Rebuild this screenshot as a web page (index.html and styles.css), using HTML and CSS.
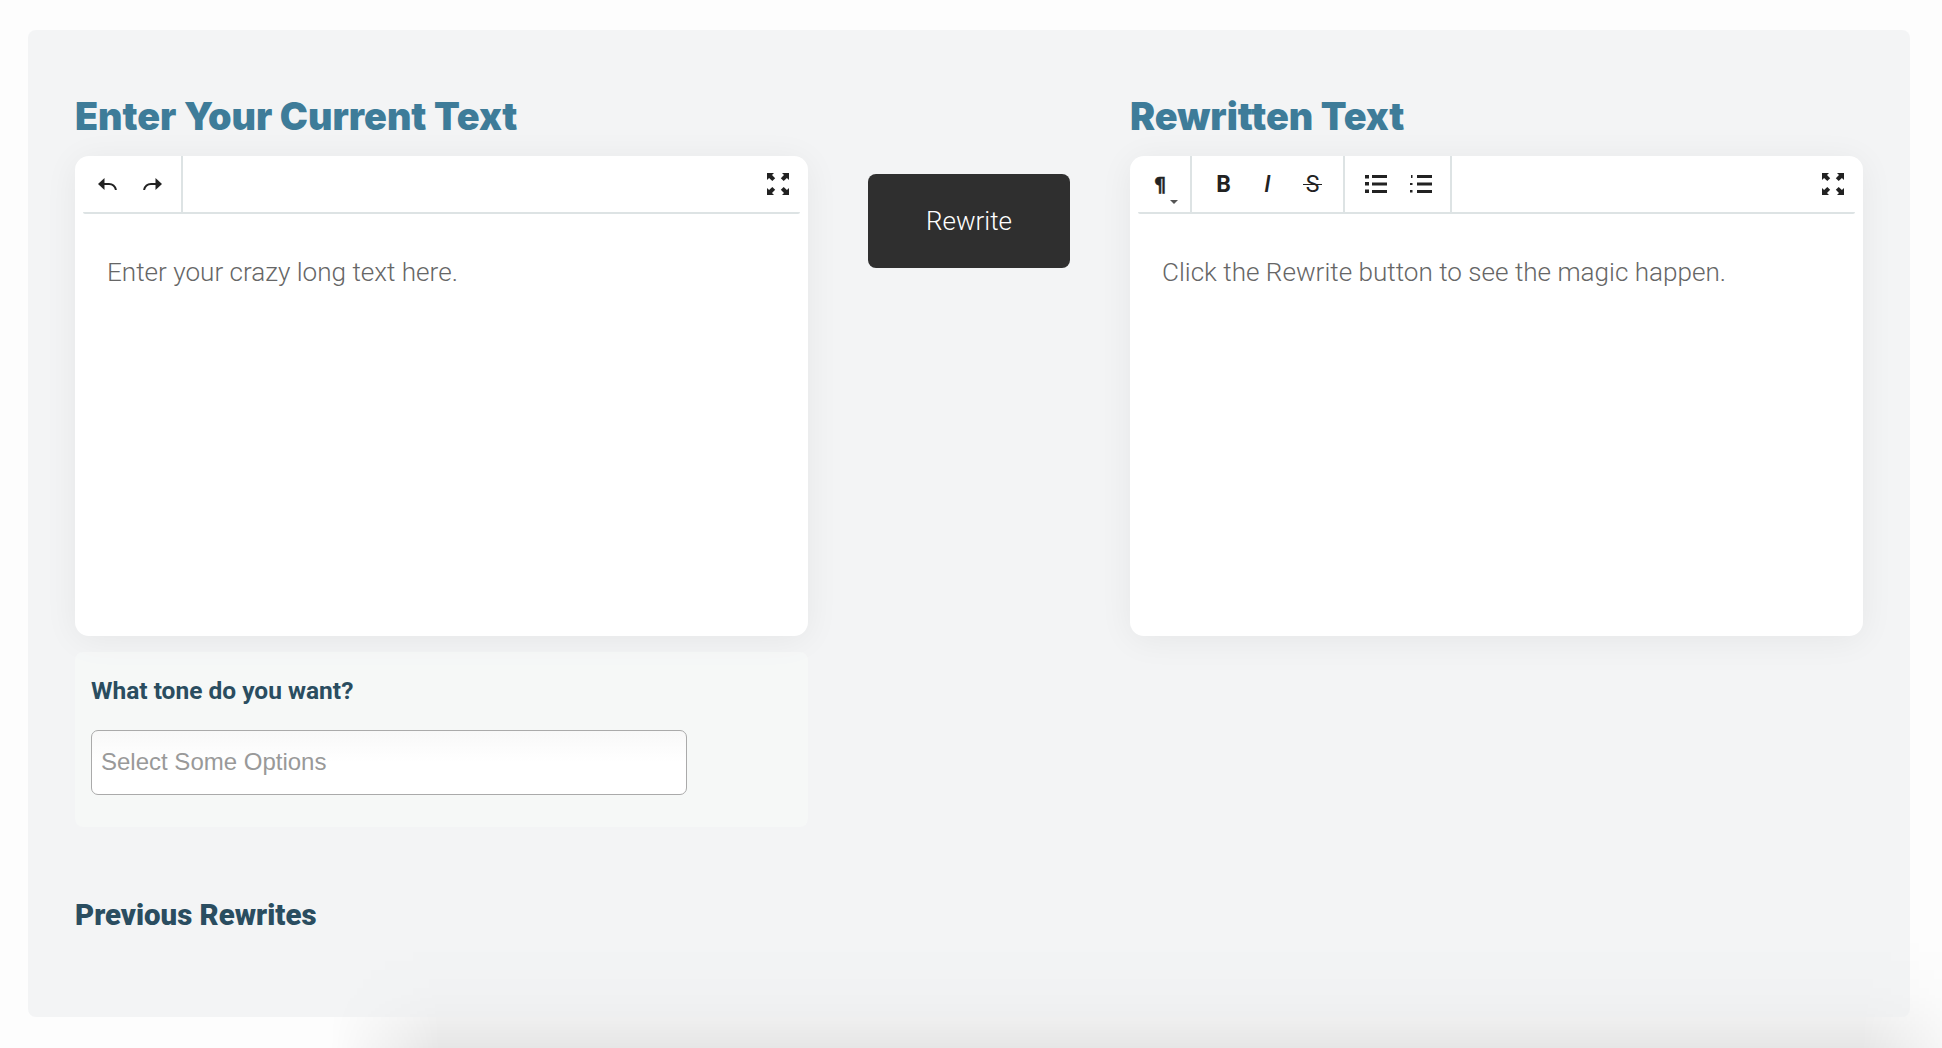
FILE: index.html
```html
<!DOCTYPE html>
<html lang="en">
<head>
<meta charset="utf-8">
<title>Rewriter</title>
<link rel="stylesheet" href="styles.css">
</head>
<body>
<div class="glow"></div>
<main class="panel">
  <div class="columns">
    <section class="col">
      <h2 class="title">Enter Your Current Text</h2>
      <div class="card">
        <div class="toolbar">
          <div class="group group-first">
            <button class="tool"><svg class="ic-arrow" viewBox="0 0 19 12"><path d="M0 6 6.5 0v12z" class="fill"/><path d="M5 6h6c3.5 0 6 2 7 6" class="line"/></svg></button>
            <button class="tool"><svg class="ic-arrow" viewBox="0 0 19 12"><path d="M19 6 12.5 0v12z" class="fill"/><path d="M14 6H8C4.500 6 2 8 1 12" class="line"/></svg></button>
          </div>
          <button class="tool tool-full"><svg class="ic-full" viewBox="0 0 22 22"><path class="fill" d="M0 0h7L5 2l3.200 3.200-2.900 2.900L2.100 4.900 0 7zM22 0v7l-2.100-2.100-3.200 3.200-2.900-2.900L17 2l-2-2zM0 22v-7l2.100 2.100 3.200-3.200 2.900 2.900L5 20l2 2zM22 22h-7l2-2-3.200-3.200 2.900-2.900 3.200 3.200L22 15z"/></svg></button>
        </div>
        <p class="placeholder">Enter your crazy long text here.</p>
      </div>
      <div class="tone">
        <label class="tone-label">What tone do you want?</label>
        <div class="select">Select Some Options</div>
      </div>
    </section>
    <div class="action">
      <button class="rewrite">Rewrite</button>
    </div>
    <section class="col">
      <h2 class="title">Rewritten Text</h2>
      <div class="card">
        <div class="toolbar">
          <div class="group group-para">
            <button class="tool tool-para"><span class="glyph-para">¶</span><span class="caret"></span></button>
          </div>
          <div class="group">
            <button class="tool"><span class="glyph-b">B</span></button>
            <button class="tool"><span class="glyph-i">I</span></button>
            <button class="tool"><span class="glyph-s">S</span></button>
          </div>
          <div class="group group-lists">
            <button class="tool"><svg class="ic-list" viewBox="0 0 22 18"><path class="fill" d="M0 0h4v3.500H0zM7 0h15v3H7zM0 7h4v3.500H0zM7 7.500h15v3H7zM0 14.500h4V18H0zM7 15h15v3H7z"/></svg></button>
            <button class="tool"><svg class="ic-list" viewBox="0 0 22 18"><path class="fill" d="M1 0h1.500v3H1zM0 8h2.500v2H0zM0 15h2.500v2.500H0zM7 0h15v3H7zM7 7.500h15v3H7zM7 15h15v3H7z"/></svg></button>
          </div>
          <button class="tool tool-full"><svg class="ic-full" viewBox="0 0 22 22"><path class="fill" d="M0 0h7L5 2l3.200 3.200-2.900 2.900L2.100 4.900 0 7zM22 0v7l-2.100-2.100-3.200 3.200-2.900-2.900L17 2l-2-2zM0 22v-7l2.100 2.100 3.200-3.200 2.900 2.900L5 20l2 2zM22 22h-7l2-2-3.200-3.200 2.900-2.900 3.200 3.200L22 15z"/></svg></button>
        </div>
        <p class="placeholder">Click the Rewrite button to see the magic happen.</p>
      </div>
    </section>
  </div>
  <h3 class="previous">Previous Rewrites</h3>
</main>
</body>
</html>
```
FILE: styles.css
```css
* { box-sizing: border-box; }
html, body { height: 100%; }
body {
  margin: 0;
  padding: 30px 32px 0 28px;
  background: #fdfdfd;
  overflow: hidden;
  position: relative;
  font-family: Roboto, "Liberation Sans", sans-serif;
}
.glow {
  position: absolute;
  left: 330px;
  right: 0;
  bottom: 0;
  height: 110px;
  background: linear-gradient(rgba(0, 0, 0, 0), rgba(0, 0, 0, 0.025) 50%, rgba(0, 0, 0, 0.09));
  -webkit-mask-image: linear-gradient(to right, transparent, #000 110px, #000 calc(100% - 80px), rgba(0, 0, 0, 0.3));
  mask-image: linear-gradient(to right, transparent, #000 110px, #000 calc(100% - 80px), rgba(0, 0, 0, 0.3));
}
.panel {
  position: relative;
  height: 987px;
  padding: 63px 47px 0;
  background: rgba(236, 238, 240, 0.6);
  border-radius: 8px;
}
.columns {
  display: grid;
  grid-template-columns: 733px 1fr 733px;
}
.title {
  margin: 0 0 17px;
  font-family: Inter, sans-serif;
  font-weight: 900;
  font-size: 37.7px;
  line-height: 46px;
  color: #3e7c99;
}
.card {
  height: 480px;
  background: #fff;
  border-radius: 14px;
  box-shadow: 0 4px 34px rgba(0, 0, 0, 0.06);
  padding: 0 8px;
}
.toolbar {
  display: flex;
  height: 58px;
  border-bottom: 2px solid #dde3e4;
  border-radius: 0 0 2px 2px;
}
.group {
  display: flex;
  padding: 0 8px;
  border-right: 2px solid #dde3e4;
}
.group-first { padding: 0 6px 0 2px; }
.group-para { padding: 0; }
.group-lists { padding-right: 7px; }
.tool {
  position: relative;
  display: flex;
  align-items: center;
  justify-content: center;
  width: 45px;
  padding: 0;
  border: 0;
  background: none;
  color: #222;
}
.tool-para { width: 52px; padding-right: 8px; }
.tool-full { width: 44px; margin-left: auto; }
.fill { fill: #222; }
.line { fill: none; stroke: #222; stroke-width: 2; }
.ic-arrow { width: 19px; height: 12px; }
.ic-full { width: 22px; height: 22px; }
.ic-list { width: 22px; height: 18px; }
.glyph-para {
  font: 700 19px/1 "DejaVu Sans", sans-serif;
  -webkit-text-stroke: 0.5px #222;
}
.glyph-b { font: 700 23px/1 Roboto, sans-serif; margin-left: 2px; }
.glyph-i { font: italic 500 23px/1 Roboto, sans-serif; }
.glyph-s {
  position: relative;
  font: 400 23px/1 Roboto, sans-serif;
}
.glyph-s::after {
  content: "";
  position: absolute;
  left: -3px;
  right: -3px;
  top: 11px;
  height: 1.500px;
  background: #222;
}
.caret {
  position: absolute;
  left: 32px;
  bottom: 8px;
  border-left: 4px solid transparent;
  border-right: 4px solid transparent;
  border-top: 4px solid #555;
}
.placeholder {
  margin: 0;
  padding: 43px 24px 0;
  font-weight: 300;
  font-size: 26.1px;
  line-height: 30px;
  color: #666;
}
.tone {
  height: 175px;
  margin-top: 16px;
  padding: 24px 16px 0;
  background: rgba(250, 252, 250, 0.42);
  border-radius: 8px;
}
.tone-label {
  display: block;
  font-weight: 700;
  font-size: 24.5px;
  line-height: 30px;
  color: #2a4d60;
}
.select {
  display: flex;
  align-items: center;
  width: 596px;
  height: 65px;
  margin-top: 24px;
  padding: 0 9px 2px;
  border: 1px solid #aaa;
  border-radius: 7px;
  background: linear-gradient(#f8f8f8, #fff 50%);
  font-family: "Liberation Sans", sans-serif;
  font-size: 24px;
  color: #999;
}
.action {
  display: flex;
  justify-content: center;
  align-items: flex-start;
  padding-top: 81px;
}
.rewrite {
  width: 202px;
  height: 94px;
  border: 0;
  border-radius: 8px;
  background: #2f2f2f;
  color: #fff;
  font-family: Roboto, sans-serif;
  font-weight: 300;
  font-size: 26px;
}
.previous {
  margin: 71px 0 0;
  font-weight: 900;
  font-size: 29.4px;
  line-height: 34px;
  color: #2a4d60;
}
```
